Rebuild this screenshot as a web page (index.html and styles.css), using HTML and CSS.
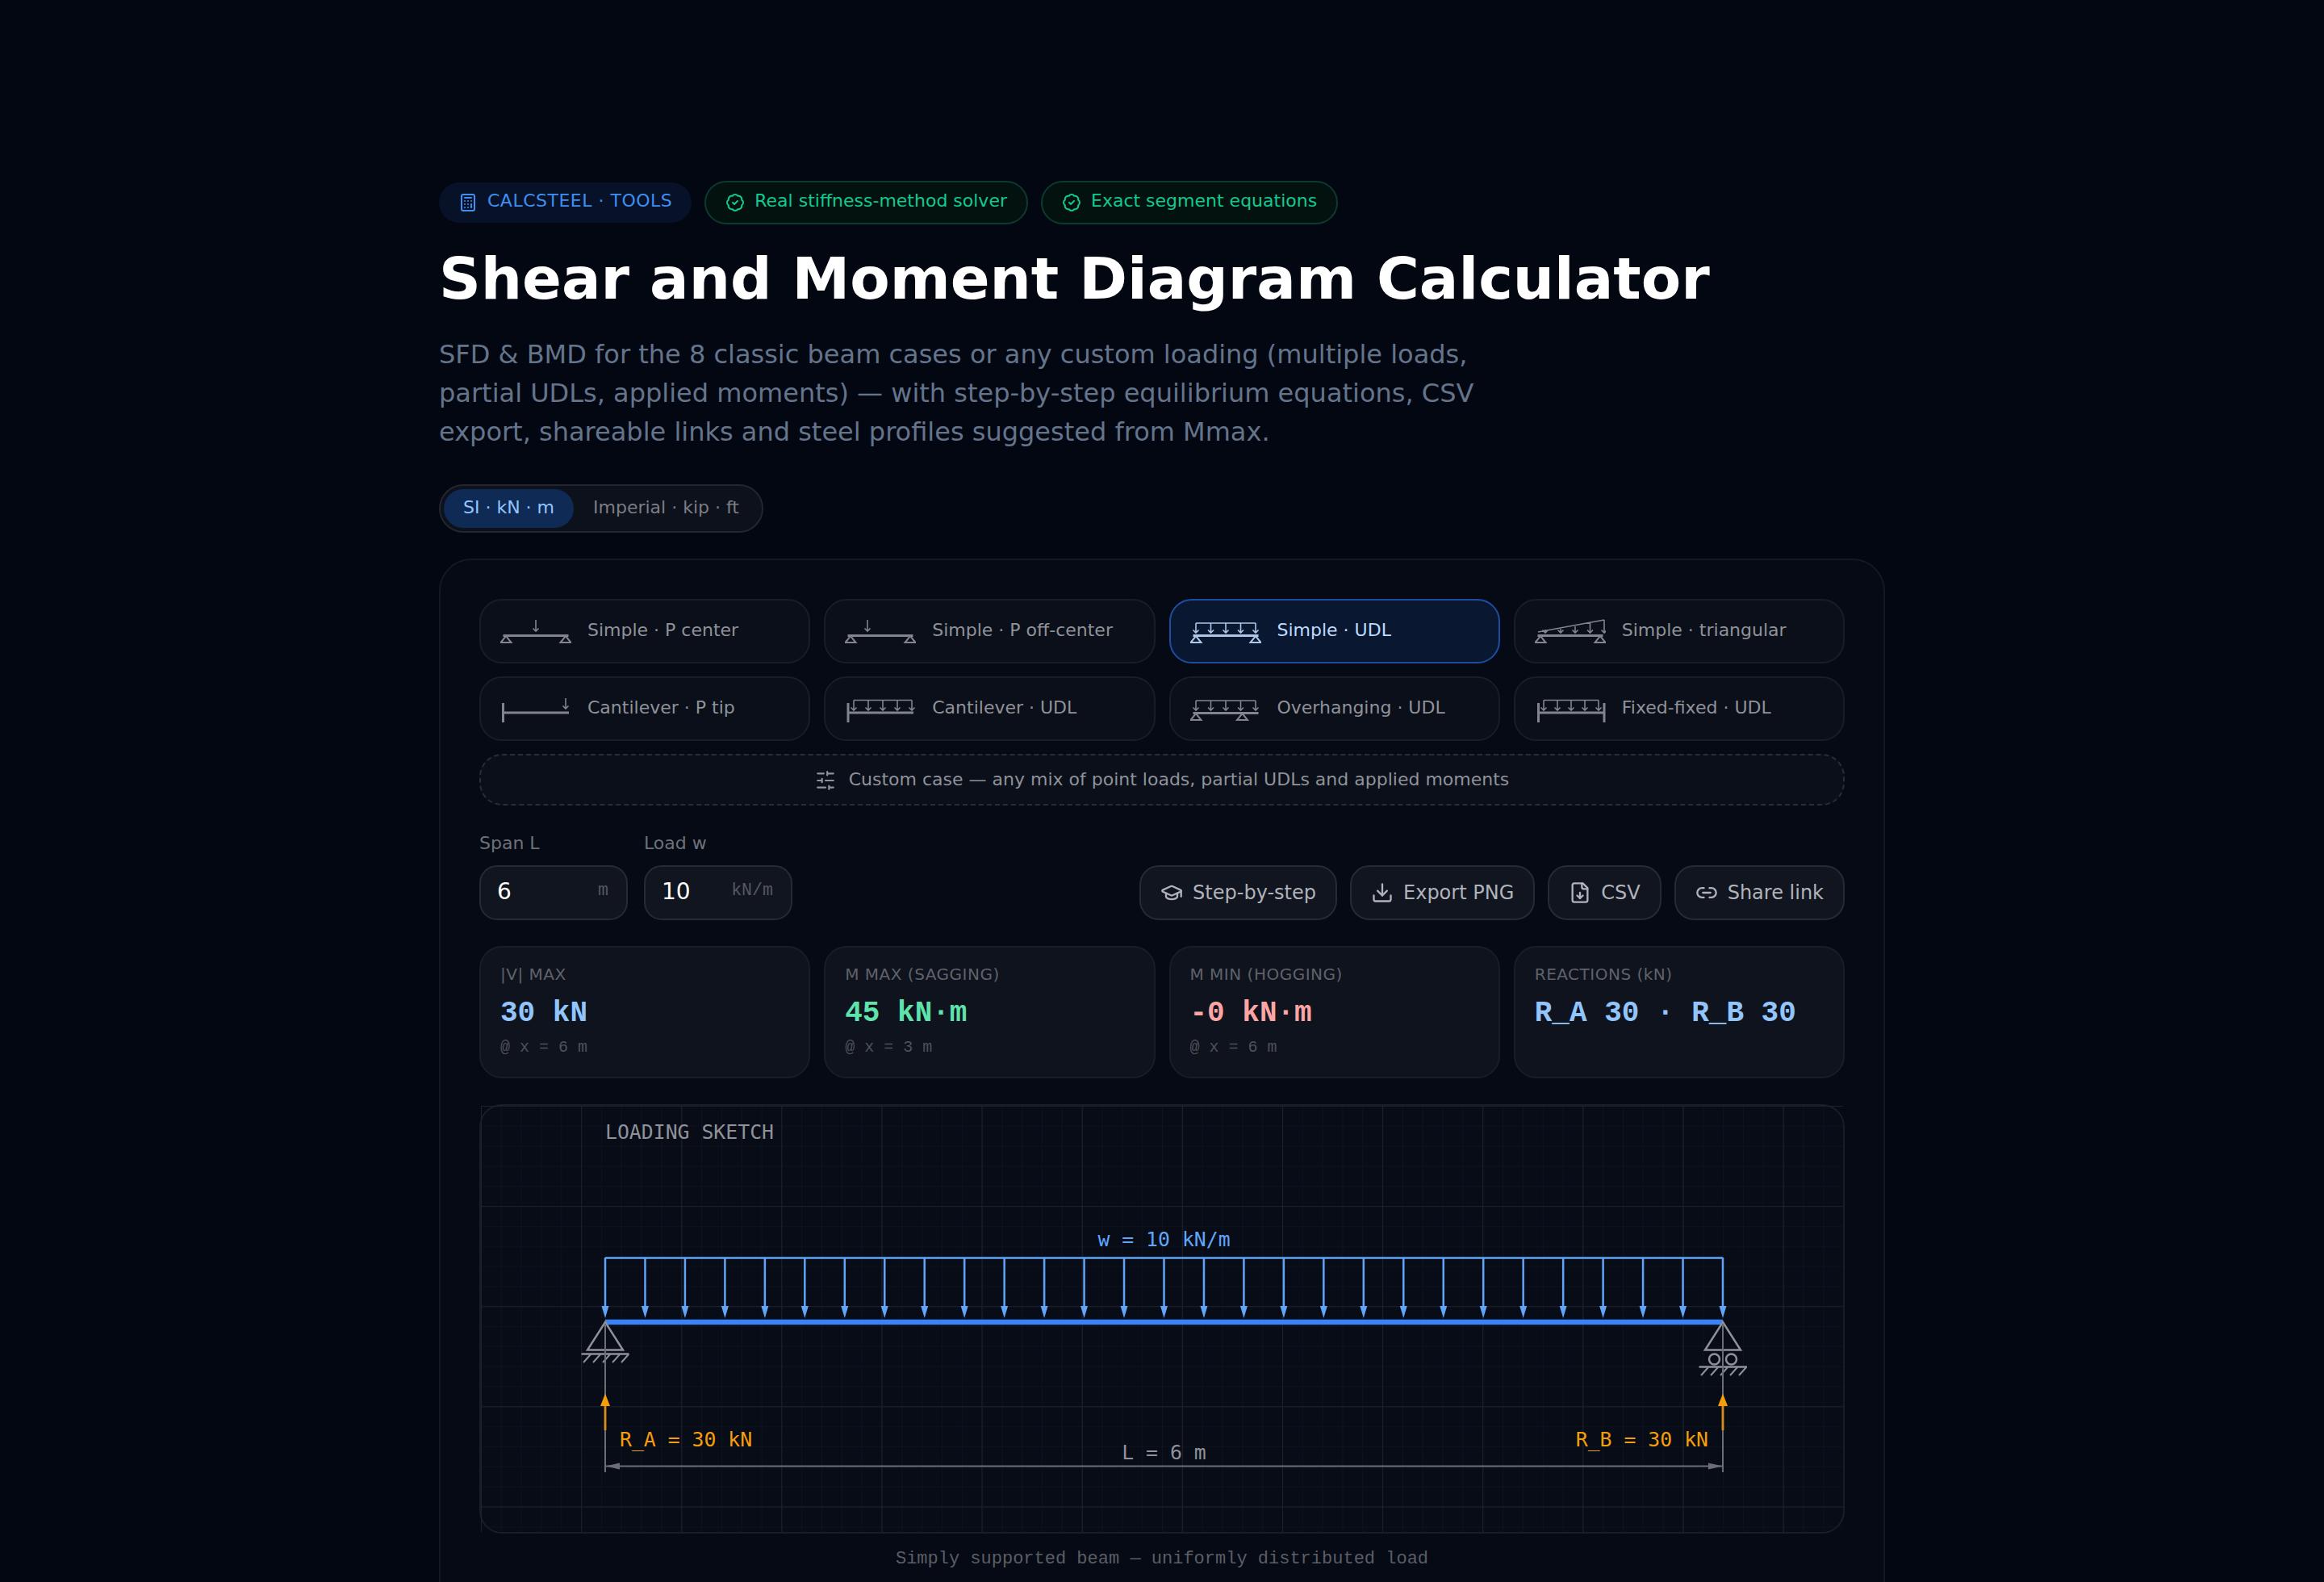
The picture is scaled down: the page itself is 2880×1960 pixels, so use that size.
FILE: index.html
```html
<!DOCTYPE html>
<html lang="en">
<head>
    <meta charset="UTF-8">
    <meta name="viewport" content="width=device-width, initial-scale=1.0">
    <title>Shear and Moment Diagram Calculator</title>
    <link rel="stylesheet" href="styles.css">
</head>
<body>
    <!-- shared bits of the small beam icons -->
    <svg class="defs" aria-hidden="true">
        <defs>
            <path id="beam" d="M3.5 27.5H84.5"/>
            <path id="pin-a" class="pin" d="M7 28 13.5 36H.5Z"/>
            <path id="pin-b" class="pin" d="M81 28 87.5 36H74.5Z"/>
            <path id="udl" d="M7 12H81M7 12V24M3.500 20.500 7 24l3.500-3.500M25.500 12V24M22 20.500l3.500 3.500 3.500-3.500M44 12V24M40.500 20.500 44 24l3.500-3.500M62.500 12V24M59 20.500l3.500 3.500 3.500-3.500M81 12V24M77.500 20.500 81 24l3.500-3.500"/>
        </defs>
    </svg>

    <div class="page">
        <div class="badges">
            <span class="badge badge-blue">
                <svg class="lucide" viewBox="0 0 24 24"><rect width="16" height="20" x="4" y="2" rx="2"/><line x1="8" x2="16" y1="6" y2="6"/><line x1="16" x2="16" y1="14" y2="18"/><path d="M16 10h.01M12 10h.01M8 10h.01M12 14h.01M8 14h.01M12 18h.01M8 18h.01"/></svg>
                CALCSTEEL · TOOLS
            </span>
            <span class="badge badge-green">
                <svg class="lucide" viewBox="0 0 24 24"><path d="M3.85 8.62a4 4 0 0 1 4.78-4.77 4 4 0 0 1 6.74 0 4 4 0 0 1 4.78 4.78 4 4 0 0 1 0 6.74 4 4 0 0 1-4.77 4.78 4 4 0 0 1-6.75 0 4 4 0 0 1-4.78-4.77 4 4 0 0 1 0-6.76Z"/><path d="m9 12 2 2 4-4"/></svg>
                Real stiffness-method solver
            </span>
            <span class="badge badge-green">
                <svg class="lucide" viewBox="0 0 24 24"><path d="M3.85 8.62a4 4 0 0 1 4.78-4.77 4 4 0 0 1 6.74 0 4 4 0 0 1 4.78 4.78 4 4 0 0 1 0 6.74 4 4 0 0 1-4.77 4.78 4 4 0 0 1-6.75 0 4 4 0 0 1-4.78-4.77 4 4 0 0 1 0-6.76Z"/><path d="m9 12 2 2 4-4"/></svg>
                Exact segment equations
            </span>
        </div>

        <h1>Shear and Moment Diagram Calculator</h1>

        <p class="intro">SFD &amp; BMD for the 8 classic beam cases or any custom loading (multiple loads, partial UDLs, applied moments) — with step-by-step equilibrium equations, CSV export, shareable links and steel profiles suggested from Mmax.</p>

        <div class="units">
            <button class="unit unit-on">SI · kN · m</button>
            <button class="unit">Imperial · kip · ft</button>
        </div>

        <section class="card">
            <div class="cases">
                <button class="case">
                    <svg class="case-icon" viewBox="0 0 88 44"><use href="#beam" class="thick"/><use href="#pin-a"/><use href="#pin-b"/><path d="M44 8V22M40.500 18.500 44 22l3.500-3.500"/></svg>
                    Simple · P center
                </button>
                <button class="case">
                    <svg class="case-icon" viewBox="0 0 88 44"><use href="#beam" class="thick"/><use href="#pin-a"/><use href="#pin-b"/><path d="M28 8V22M24.500 18.500 28 22l3.500-3.500"/></svg>
                    Simple · P off-center
                </button>
                <button class="case case-on">
                    <svg class="case-icon" viewBox="0 0 88 44"><use href="#udl"/><use href="#beam" class="thick"/><use href="#pin-a"/><use href="#pin-b"/></svg>
                    Simple · UDL
                </button>
                <button class="case">
                    <svg class="case-icon" viewBox="0 0 88 44"><path d="M4 23 86 8M13 20V24M9.500 20.500 13 24l3.500-3.500M32 18V24M28.500 20.500 32 24l3.500-3.500M50 14.500V24M46.500 20.500 50 24l3.500-3.500M68.500 11V24M65 20.500l3.500 3.500 3.500-3.500M86 8V24M82.500 20.500 86 24l3.500-3.500"/><use href="#beam" class="thick"/><use href="#pin-a"/><use href="#pin-b"/></svg>
                    Simple · triangular
                </button>
                <button class="case">
                    <svg class="case-icon" viewBox="0 0 88 44"><path class="thick" d="M3.500 27H85M3.500 15V39"/><path d="M81 9V22M77.500 18.500 81 22l3.500-3.500"/></svg>
                    Cantilever · P tip
                </button>
                <button class="case">
                    <svg class="case-icon" viewBox="0 0 88 44"><path class="thick" d="M4 27H85M4 15V39"/><path d="M11 11.500H83M11 11.500V24M7.500 20.500 11 24l3.500-3.500M29 11.500V24M25.500 20.500 29 24l3.500-3.500M47 11.500V24M43.500 20.500 47 24l3.500-3.500M65 11.500V24M61.500 20.500 65 24l3.500-3.500M83 11.500V24M79.500 20.500 83 24l3.500-3.500"/></svg>
                    Cantilever · UDL
                </button>
                <button class="case">
                    <svg class="case-icon" viewBox="0 0 88 44"><use href="#udl"/><use href="#beam" class="thick"/><use href="#pin-a"/><path class="pin" d="M64.500 28 71 36H58Z"/></svg>
                    Overhanging · UDL
                </button>
                <button class="case">
                    <svg class="case-icon" viewBox="0 0 88 44"><path class="thick" d="M4.500 27H86M4.500 15V39M86 15V39"/><path d="M11 11.500H79M11 11.500V24M7.500 20.500 11 24l3.500-3.500M28 11.500V24M24.500 20.500 28 24l3.500-3.500M45 11.500V24M41.500 20.500 45 24l3.500-3.500M62 11.500V24M58.500 20.500 62 24l3.500-3.500M79 11.500V24M75.500 20.500 79 24l3.500-3.500"/></svg>
                    Fixed-fixed · UDL
                </button>
            </div>

            <button class="custom-case">
                <svg class="lucide" viewBox="0 0 24 24"><path d="M21 4h-7M10 4H3M21 12h-9M8 12H3M21 20h-5M12 20H3M14 2v4M8 10v4M16 18v4"/></svg>
                Custom case — any mix of point loads, partial UDLs and applied moments
            </button>

            <div class="controls">
                <div class="fields">
                    <div class="field">
                        <div class="field-label">Span L</div>
                        <div class="field-box"><span class="field-value">6</span><span class="field-unit">m</span></div>
                    </div>
                    <div class="field">
                        <div class="field-label">Load w</div>
                        <div class="field-box"><span class="field-value">10</span><span class="field-unit">kN/m</span></div>
                    </div>
                </div>
                <div class="actions">
                    <button class="action">
                        <svg class="lucide" viewBox="0 0 24 24"><path d="M21.420 10.922a1 1 0 0 0-.019-1.838L12.830 5.180a2 2 0 0 0-1.660 0L2.600 9.080a1 1 0 0 0 0 1.832l8.570 3.908a2 2 0 0 0 1.660 0z"/><path d="M22 10v6"/><path d="M6 12.500V16a6 3 0 0 0 12 0v-3.500"/></svg>
                        Step-by-step
                    </button>
                    <button class="action">
                        <svg class="lucide" viewBox="0 0 24 24"><path d="M21 15v4a2 2 0 0 1-2 2H5a2 2 0 0 1-2-2v-4"/><path d="M7 10l5 5 5-5"/><path d="M12 15V3"/></svg>
                        Export PNG
                    </button>
                    <button class="action">
                        <svg class="lucide" viewBox="0 0 24 24"><path d="M15 2H6a2 2 0 0 0-2 2v16a2 2 0 0 0 2 2h12a2 2 0 0 0 2-2V7Z"/><path d="M14 2v4a2 2 0 0 0 2 2h4"/><path d="M12 18v-6"/><path d="m9 15 3 3 3-3"/></svg>
                        CSV
                    </button>
                    <button class="action">
                        <svg class="lucide" viewBox="0 0 24 24"><path d="M9 17H7A5 5 0 0 1 7 7h2"/><path d="M15 7h2a5 5 0 1 1 0 10h-2"/><path d="M8 12h8"/></svg>
                        Share link
                    </button>
                </div>
            </div>

            <div class="stats">
                <div class="stat">
                    <div class="stat-label">|V| MAX</div>
                    <div class="stat-value blue">30 kN</div>
                    <div class="stat-sub">@ x = 6 m</div>
                </div>
                <div class="stat">
                    <div class="stat-label">M MAX (SAGGING)</div>
                    <div class="stat-value green">45 kN·m</div>
                    <div class="stat-sub">@ x = 3 m</div>
                </div>
                <div class="stat">
                    <div class="stat-label">M MIN (HOGGING)</div>
                    <div class="stat-value red">-0 kN·m</div>
                    <div class="stat-sub">@ x = 6 m</div>
                </div>
                <div class="stat">
                    <div class="stat-label">REACTIONS (kN)</div>
                    <div class="stat-value blue">R_A 30 · R_B 30</div>
                </div>
            </div>

            <div class="sketch">
                <svg class="sketch-svg" viewBox="0 0 1688 528">
                    <defs>
                        <pattern id="grid-minor" width="24.824" height="24.824" patternUnits="userSpaceOnUse">
                            <path d="M24.824 0H0V24.824" fill="none" stroke="#111723" stroke-width="1.200"/>
                        </pattern>
                        <pattern id="grid-major" width="124.120" height="124.120" patternUnits="userSpaceOnUse">
                            <path d="M124.120 0H0V124.120" fill="none" stroke="#1c212c" stroke-width="2"/>
                        </pattern>
                        <g id="load-arrow">
                            <path d="M0 188V250" stroke="#60a5fa" stroke-width="2.500"/>
                            <path d="M-4.500 248H4.500L0 263Z" fill="#60a5fa"/>
                        </g>
                    </defs>
                    <rect width="1688" height="528" fill="url(#grid-minor)"/>
                    <rect width="1688" height="528" fill="url(#grid-major)"/>

                    <text class="sketch-text title-text" x="154" y="41">LOADING SKETCH</text>
                    <text class="sketch-text load-text" x="846.500" y="174" text-anchor="middle">w = 10 kN/m</text>

                    <path d="M154 188.500H1539" stroke="#60a5fa" stroke-width="2.500"/>
                    <use href="#load-arrow" x="154"/>
                    <use href="#load-arrow" x="203.460"/>
                    <use href="#load-arrow" x="252.930"/>
                    <use href="#load-arrow" x="302.390"/>
                    <use href="#load-arrow" x="351.860"/>
                    <use href="#load-arrow" x="401.320"/>
                    <use href="#load-arrow" x="450.790"/>
                    <use href="#load-arrow" x="500.250"/>
                    <use href="#load-arrow" x="549.710"/>
                    <use href="#load-arrow" x="599.180"/>
                    <use href="#load-arrow" x="648.640"/>
                    <use href="#load-arrow" x="698.110"/>
                    <use href="#load-arrow" x="747.570"/>
                    <use href="#load-arrow" x="797.040"/>
                    <use href="#load-arrow" x="846.500"/>
                    <use href="#load-arrow" x="895.960"/>
                    <use href="#load-arrow" x="945.430"/>
                    <use href="#load-arrow" x="994.890"/>
                    <use href="#load-arrow" x="1044.360"/>
                    <use href="#load-arrow" x="1093.820"/>
                    <use href="#load-arrow" x="1143.290"/>
                    <use href="#load-arrow" x="1192.750"/>
                    <use href="#load-arrow" x="1242.210"/>
                    <use href="#load-arrow" x="1291.680"/>
                    <use href="#load-arrow" x="1341.140"/>
                    <use href="#load-arrow" x="1390.610"/>
                    <use href="#load-arrow" x="1440.070"/>
                    <use href="#load-arrow" x="1489.540"/>
                    <use href="#load-arrow" x="1539"/>

                    <path d="M154 268H1539" stroke="#3b82f6" stroke-width="6.400"/>

                    <!-- pinned support -->
                    <g fill="none" stroke="#8f9198" stroke-width="2.500">
                        <path d="M154 268 176 302.500H132Z"/>
                        <path d="M124.500 307.500H183.500"/>
                        <path d="M136 308 127 318M148 308 139 318M160 308 151 318M172 308 163 318M183 308 174 318" stroke-width="2"/>
                    </g>
                    <!-- roller support -->
                    <g fill="none" stroke="#8f9198" stroke-width="2.500">
                        <path d="M1539 268 1561 302.500H1517Z"/>
                        <circle cx="1528.500" cy="314" r="6.500"/>
                        <circle cx="1549.500" cy="314" r="6.500"/>
                        <path d="M1509.500 323.500H1569"/>
                        <path d="M1521 324 1512 334M1533 324 1524 334M1545 324 1536 334M1557 324 1548 334M1568 324 1559 334" stroke-width="2"/>
                    </g>

                    <!-- dimension line -->
                    <g stroke="#6b6e76" stroke-width="2" fill="none">
                        <path d="M154 270V454M1539 270V454M154 446.500H1539"/>
                    </g>
                    <path d="M154 446.500 172 442.500V450.500Z M1539 446.500 1521 442.500V450.500Z" fill="#6b6e76"/>
                    <text class="sketch-text dim-text" x="846.500" y="438" text-anchor="middle">L = 6 m</text>

                    <!-- reactions -->
                    <g fill="#f59e0b">
                        <path d="M154 356.500 160 372H148Z M1539 356.500 1545 372H1533Z"/>
                        <path d="M152.500 370H155.500V402H152.500Z M1537.500 370H1540.500V402H1537.500Z" opacity="0.750"/>
                    </g>
                    <text class="sketch-text react-text" x="172" y="422">R_A = 30 kN</text>
                    <text class="sketch-text react-text" x="1521" y="422" text-anchor="end">R_B = 30 kN</text>
                </svg>
            </div>

            <div class="caption">Simply supported beam — uniformly distributed load</div>
        </section>
    </div>
</body>
</html>
```

FILE: styles.css
```css
html, body {
    height: 1960px;
    overflow: hidden;
}
body {
    margin: 0;
    background: #030712;
    font-family: "DejaVu Sans", sans-serif;
    color: #9a9da4;
}
button {
    font-family: inherit;
    cursor: pointer;
}
.defs {
    position: absolute;
    width: 0;
    height: 0;
}
.page {
    width: 1792px;
    height: 1960px;
    box-sizing: border-box;
    margin: 0 auto;
    padding-top: 224px;
    overflow: hidden;
}
.lucide {
    fill: none;
    stroke: currentColor;
    stroke-width: 2;
    stroke-linecap: round;
    stroke-linejoin: round;
    flex-shrink: 0;
}

/* header */
.badges {
    display: flex;
    align-items: center;
    gap: 16px;
}
.badge {
    display: flex;
    align-items: center;
    gap: 12px;
    box-sizing: border-box;
    padding: 0 24px 5px;
    height: 50px;
    border-radius: 999px;
    font-size: 22px;
}
.badge .lucide {
    width: 24px;
    height: 24px;
    margin-top: 4px;
}
.badge-blue {
    background: #071229;
    color: #3f8ef0;
    letter-spacing: 0.5px;
}
.badge-green {
    height: 54px;
    background: #04120f;
    color: #12c98f;
    border: 2px solid #0c3a2f;
}
h1 {
    margin: 25px 0 0;
    font-size: 72px;
    line-height: 84px;
    font-weight: 700;
    color: #fff;
}
.intro {
    margin: 28px 0 0;
    max-width: 1300px;
    font-size: 32px;
    line-height: 48px;
    color: #64748b;
}
.units {
    display: inline-flex;
    margin-top: 41px;
    padding: 4px;
    height: 60px;
    box-sizing: border-box;
    border: 2px solid #23262f;
    border-radius: 999px;
    background: #0d111b;
}
.unit {
    padding: 0 24px 3px;
    border: 0;
    border-radius: 999px;
    background: transparent;
    font-size: 22px;
    color: #7b7e85;
}
.unit-on {
    background: #102a56;
    color: #93c5fd;
}

/* main card */
.card {
    margin-top: 32px;
    padding: 48px 48px 120px;
    border: 2px solid #14181f;
    border-radius: 40px;
    background: #060a14;
}
.cases {
    display: grid;
    grid-template-columns: repeat(4, 1fr);
    gap: 16px 17px;
}
.case {
    display: flex;
    align-items: center;
    gap: 20px;
    height: 80px;
    padding: 0 24px 3px;
    border: 2px solid #1a1d26;
    border-radius: 28px;
    background: #0b0f19;
    font-size: 22px;
    color: #8f9299;
    text-align: left;
}
.case-icon {
    width: 88px;
    height: 44px;
    margin-top: 3px;
    flex-shrink: 0;
    fill: none;
    stroke: currentColor;
    stroke-width: 1.600;
    opacity: 0.9;
}
.pin {
    stroke-width: 2;
}
.thick {
    stroke-width: 3;
}
.case-on {
    background: #0a1730;
    border-color: #1d4d9e;
    color: #bfdbfe;
}
.custom-case {
    display: flex;
    align-items: center;
    justify-content: center;
    gap: 16px;
    width: 100%;
    height: 64px;
    margin-top: 16px;
    padding-bottom: 3px;
    border: 2px dashed #2a2d36;
    border-radius: 28px;
    background: #0b0f19;
    font-size: 22px;
    color: #8f9299;
}
.custom-case .lucide {
    width: 26px;
    height: 26px;
    margin-top: 3px;
}

/* inputs and buttons */
.controls {
    display: flex;
    justify-content: space-between;
    align-items: flex-end;
    margin-top: 32px;
}
.fields {
    display: flex;
    gap: 20px;
}
.field-label {
    margin-bottom: 12px;
    font-size: 22px;
    line-height: 30px;
    color: #6e7178;
}
.field-box {
    display: flex;
    justify-content: space-between;
    width: 184px;
    height: 68px;
    box-sizing: border-box;
    padding: 0 22px 0 20px;
    border: 2px solid #262a34;
    border-radius: 22px;
    background: #111520;
    line-height: 62px;
}
.field-value {
    font-size: 28px;
    color: #fff;
}
.field-unit {
    font-family: "Liberation Mono", monospace;
    font-size: 21.600px;
    line-height: 58px;
    color: #55585f;
}
.actions {
    display: flex;
    gap: 16px;
}
.action {
    display: flex;
    align-items: center;
    gap: 12px;
    height: 68px;
    padding: 0 24px;
    border: 2px solid #262a34;
    border-radius: 24px;
    background: #111520;
    font-size: 24px;
    color: #b0b3b9;
}
.action .lucide {
    width: 28px;
    height: 28px;
}

/* result cards */
.stats {
    display: grid;
    grid-template-columns: repeat(4, 1fr);
    gap: 17px;
    margin-top: 32px;
}
.stat {
    height: 164px;
    box-sizing: border-box;
    padding: 18px 24px 0;
    border: 2px solid #1a1d26;
    border-radius: 28px;
    background: #0f131d;
}
.stat-label {
    font-size: 20px;
    line-height: 30px;
    letter-spacing: 0.5px;
    color: #5f626a;
}
.stat-value {
    margin-top: 10px;
    font-family: "Liberation Mono", monospace;
    font-weight: 700;
    font-size: 36px;
    line-height: 48px;
}
.stat-sub {
    margin-top: 4px;
    font-family: "Liberation Mono", monospace;
    font-size: 20px;
    line-height: 28px;
    color: #4e5159;
}
.blue { color: #93c5fd; }
.green { color: #5fe3ad; }
.red { color: #fca5a5; }

/* loading sketch */
.sketch {
    margin-top: 32px;
    border: 2px solid #1a1d26;
    border-radius: 28px;
    background: #070c17;
}
.sketch-svg {
    display: block;
    width: 100%;
}
.sketch-text {
    font-family: "DejaVu Sans Mono", monospace;
    font-size: 24.800px;
}
.title-text { fill: #8f9299; }
.load-text { fill: #60a5fa; }
.dim-text { fill: #8f9299; }
.react-text { fill: #f59e0b; }
.caption {
    margin-top: 20px;
    text-align: center;
    font-family: "Liberation Mono", monospace;
    font-size: 22px;
    line-height: 24px;
    color: #5a5e66;
}
```
